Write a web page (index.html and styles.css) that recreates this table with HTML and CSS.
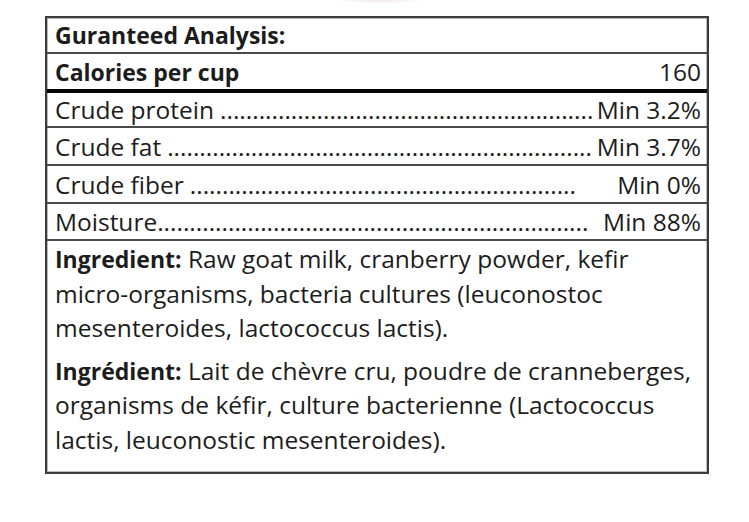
FILE: index.html
```html
<!DOCTYPE html>
<html>
<head>
<meta charset="utf-8">
<link rel="stylesheet" href="styles.css">
</head>
<body>
<div class="page">
  <div class="glow"></div>
  <div class="panel">
    <div class="row r1 bold">Guranteed Analysis:</div>
    <div class="row r2 thick"><span class="bold">Calories per cup</span><span class="val">160</span></div>
    <div class="row r3"><span class="lbl">Crude protein</span><span class="dots">..........................................................</span><span class="val">Min 3.2%</span></div>
    <div class="row r4"><span class="lbl">Crude fat</span><span class="dots">..................................................................</span><span class="val">Min 3.7%</span></div>
    <div class="row r5"><span class="lbl">Crude fiber</span><span class="dots">............................................................</span><span class="val">Min 0%</span></div>
    <div class="row r6"><span class="lbl tight">Moisture</span><span class="dots">...................................................................</span><span class="val">Min 88%</span></div>
    <div class="ingr">
      <p><b>Ingredient:</b> Raw goat milk, cranberry powder, kefir<br>micro-organisms, bacteria cultures (leuconostoc<br>mesenteroides, lactococcus lactis).</p>
      <p class="second"><b>Ingrédient:</b> Lait de chèvre cru, poudre de cranneberges,<br>organisms de kéfir, culture bacterienne (Lactococcus<br>lactis, leuconostic mesenteroides).</p>
    </div>
  </div>
</div>
</body>
</html>
```
FILE: styles.css
```css
html, body {
  margin: 0;
  padding: 0;
  background: #fff;
}
.page {
  position: relative;
  width: 749px;
  height: 522px;
  padding: 16px 0 0 45px;
  box-sizing: border-box;
  font-family: "Open Sans", Lato, sans-serif;
  color: #1c1c1c;
}
.glow {
  position: absolute;
  left: 320px;
  top: -14px;
  width: 120px;
  height: 18px;
  border-radius: 50%;
  background: radial-gradient(ellipse at center, rgba(180, 110, 130, 0.35), rgba(255, 255, 255, 0) 70%);
}
.panel {
  width: 664px;
  box-sizing: border-box;
  border: 2px solid #3c3c3c;
  box-shadow: inset 0 0 0 1px #bbb;
}
.row {
  display: flex;
  align-items: center;
  padding: 0 6px 0 8px;
  font-size: 24.5px;
  white-space: nowrap;
  border-bottom: 2px solid #4a4a4a;
  box-sizing: border-box;
}
.bold { font-weight: 700; font-size: 23px; }
.r1 { height: 36px; }
.r2 { height: 39px; border-bottom: 4px solid #050505; justify-content: space-between; }
.r3 { height: 35px; }
.r4 { height: 38px; }
.r5 { height: 38px; }
.r6 { height: 37px; }
.lbl { margin-right: 6px; flex: none; }
.lbl.tight { margin-right: 0; }
.dots {
  flex: 0 1 auto;
  min-width: 0;
  overflow: hidden;
}
.val { flex: none; margin-left: auto; padding-left: 2px; }
.ingr {
  padding: 1px 8px 15px 8px;
  font-size: 24.5px;
  line-height: 34.5px;
  white-space: nowrap;
}
.ingr p { margin: 0; }
.ingr p.second { margin-top: 8px; }
.ingr b { font-weight: 700; font-size: 23px; }
```
